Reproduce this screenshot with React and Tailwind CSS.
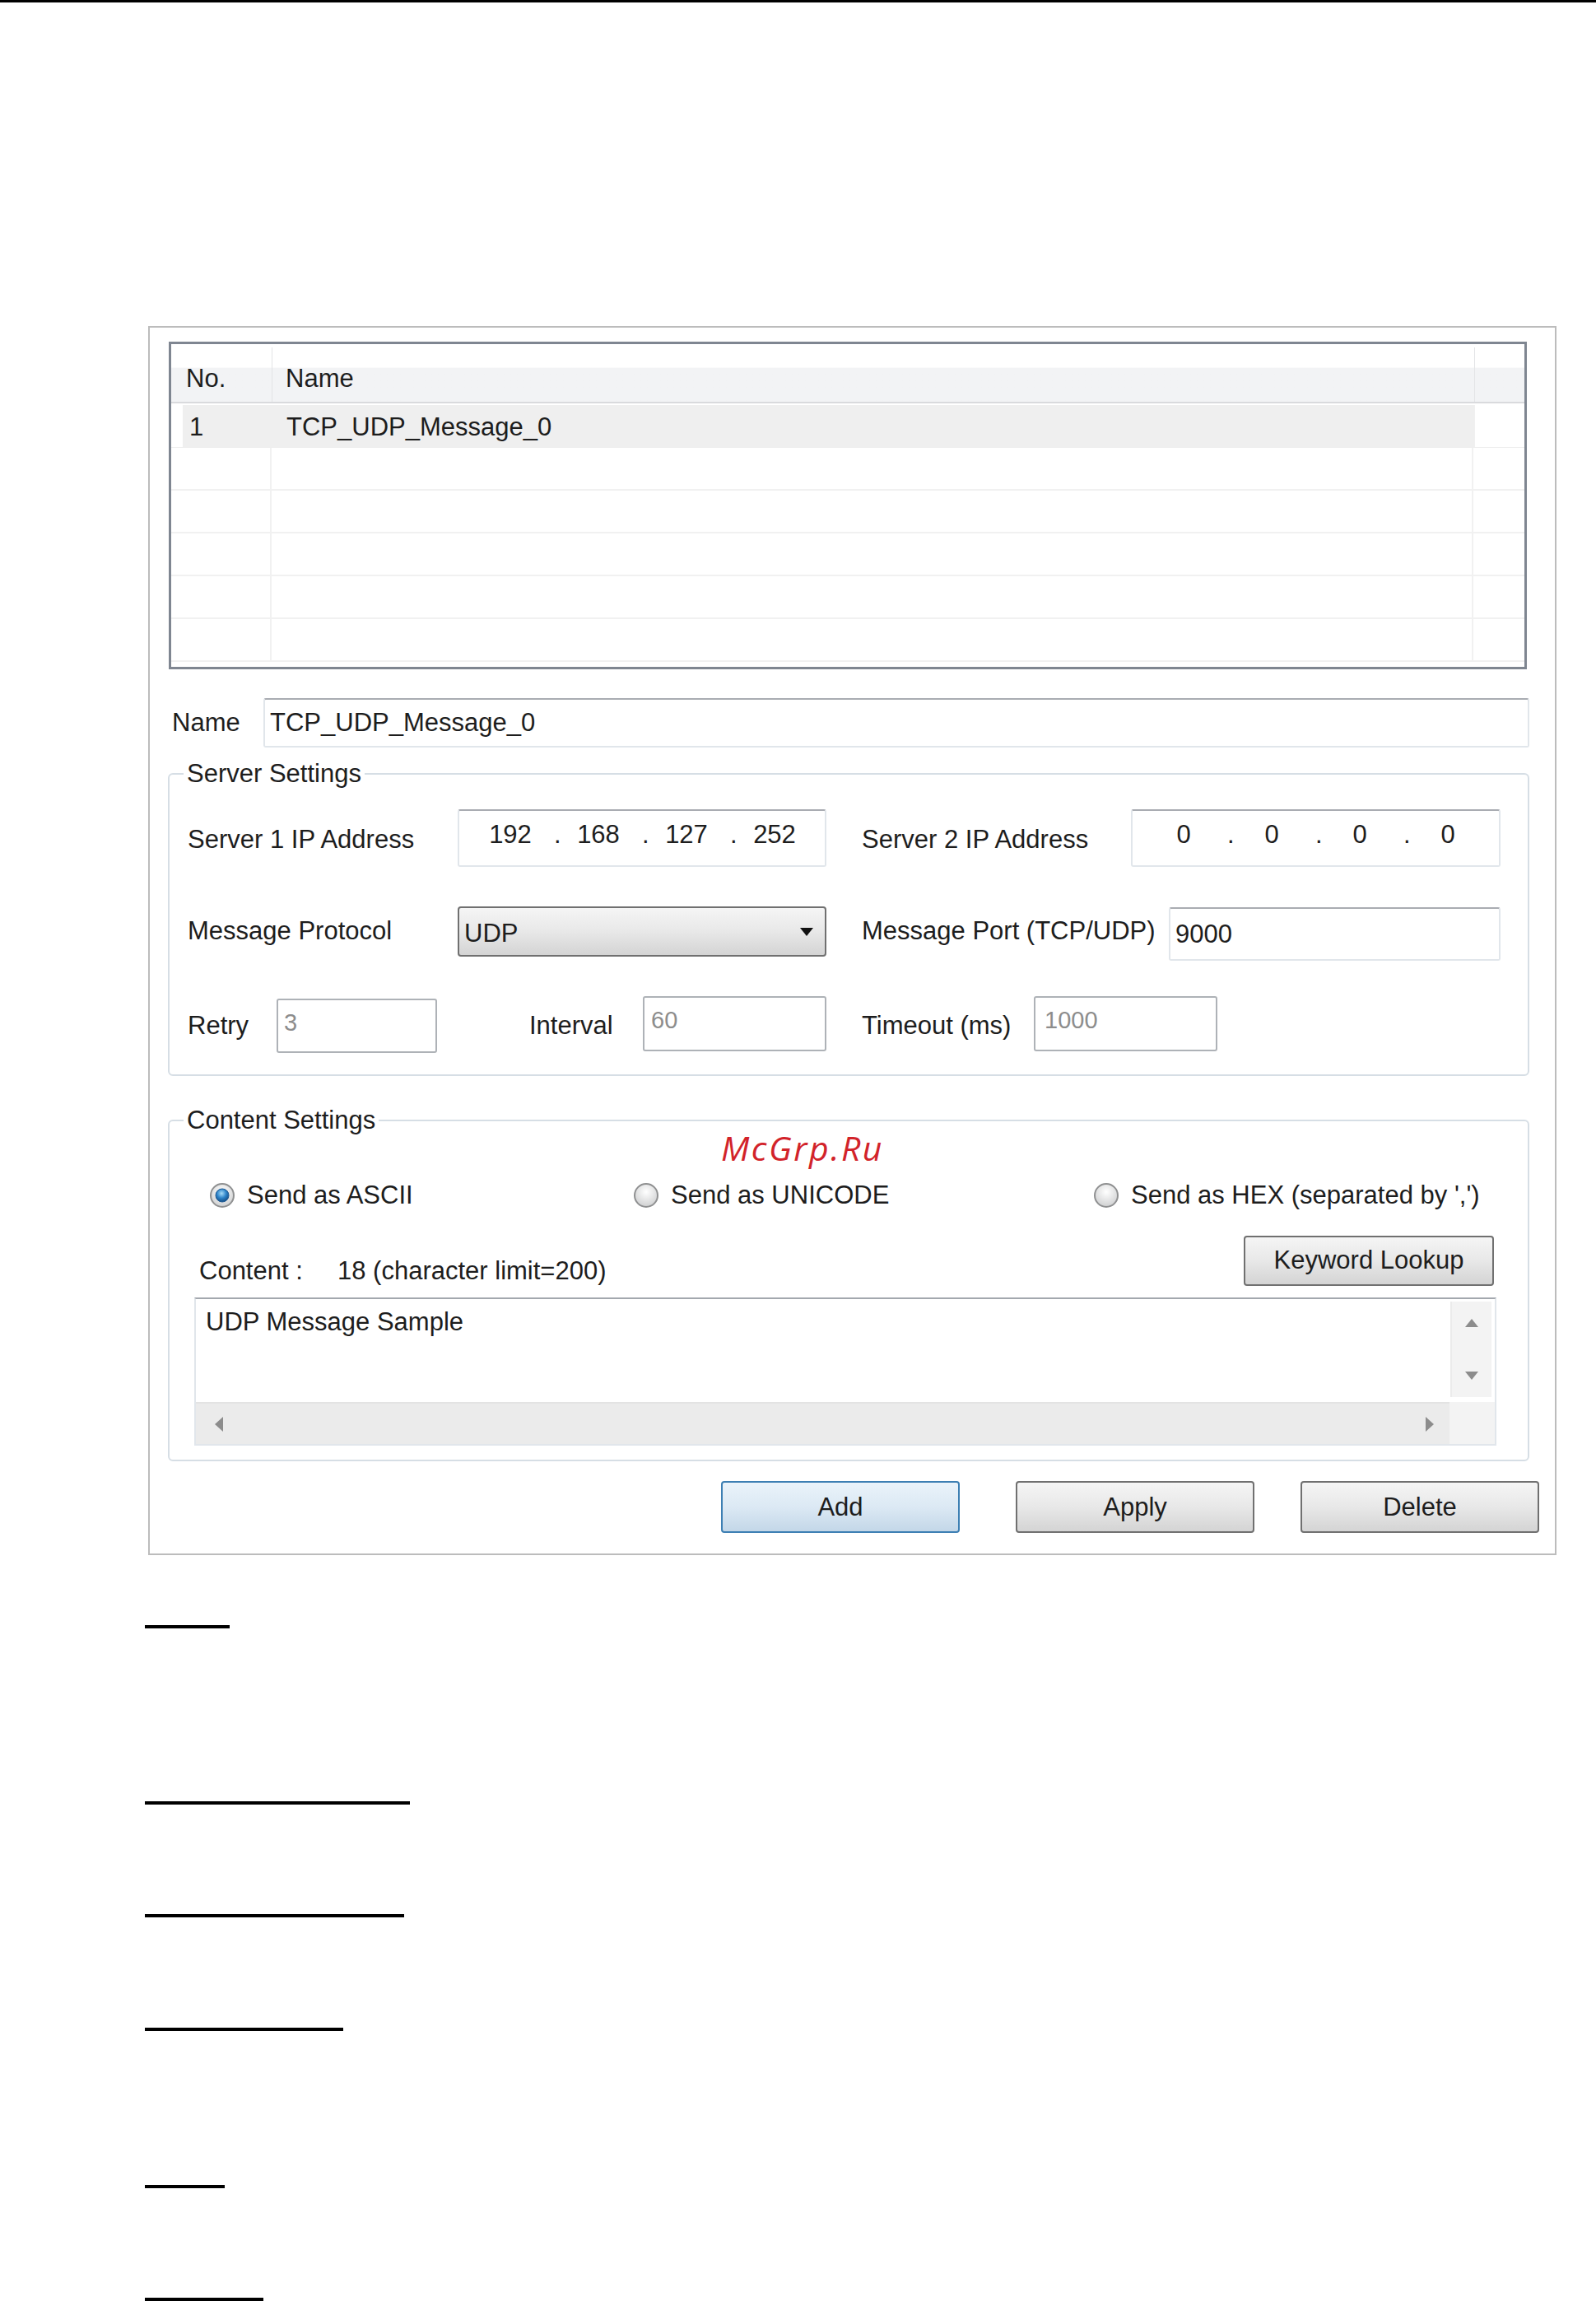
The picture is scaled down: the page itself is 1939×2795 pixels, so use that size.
import React from 'react';

// Windows-style text box; muted = the greyed-out numeric fields
function Field({ className = '', muted = false, children }) {
  return (
    <div
      className={
        'flex items-center bg-white rounded-[3px] border-2 ' +
        (muted
          ? 'border-[#aeb2b7] text-[#8d8d8d] text-[29px] pb-[8px] '
          : 'border-[#e1e6eb] border-t-[#a9acb2] ') +
        className
      }
    >
      {children}
    </div>
  );
}

function IpBox({ parts, className = '' }) {
  return (
    <Field className={'pl-[17px] pb-[8px] ' + className}>
      {parts.map((p, i) => (
        <React.Fragment key={i}>
          <span className="w-[90px] text-center">{p}</span>
          {i < 3 && <span className="w-[17px] pl-[8px]">.</span>}
        </React.Fragment>
      ))}
    </Field>
  );
}

function WinButton({ children, className = '', primary = false }) {
  return (
    <div
      className={
        'flex items-center justify-center rounded-[4px] border-2 ' +
        (primary
          ? 'border-[#3d7fb3] bg-linear-to-b from-[#eaf3fa] via-[#dce9f4] to-[#c3d7e8] '
          : 'border-[#707070] bg-linear-to-b from-[#f5f5f5] via-[#e8e8e8] to-[#d4d4d4] ') +
        className
      }
    >
      {children}
    </div>
  );
}

function Radio({ checked, id }) {
  return (
    <svg width="32" height="32" viewBox="0 0 32 32" className="shrink-0">
      <defs>
        <radialGradient id={id + '-ring'} cx="50%" cy="35%" r="65%">
          <stop offset="0" stopColor="#ffffff" />
          <stop offset="1" stopColor="#cfd0d1" />
        </radialGradient>
        <radialGradient id={id + '-dot'} cx="45%" cy="35%" r="65%">
          <stop offset="0" stopColor="#a8dcf8" />
          <stop offset="0.55" stopColor="#2b82c8" />
          <stop offset="1" stopColor="#174e86" />
        </radialGradient>
      </defs>
      <circle cx="16" cy="16" r="14" fill={`url(#${id}-ring)`} stroke="#8f9091" strokeWidth="2" />
      {checked && <circle cx="16" cy="16" r="8" fill={`url(#${id}-dot)`} stroke="#1f5a93" strokeWidth="1" />}
    </svg>
  );
}

function Arrow({ dir, className = '' }) {
  const pts = {
    up: '1,11 9,1 17,11',
    down: '1,1 17,1 9,11',
    left: '11,1 11,19 1,10',
    right: '1,1 1,19 11,10',
  }[dir];
  const vertical = dir === 'up' || dir === 'down';
  return (
    <svg width={vertical ? 18 : 12} height={vertical ? 12 : 20} className={className}>
      <polygon points={pts} fill="#8c8c8c" />
    </svg>
  );
}

function MessageTable() {
  const emptyRows = [0, 1, 2, 3, 4];
  return (
    <div className="ml-[23px] mt-[17px] w-[1650px] h-[398px] border-[3px] border-[#7f8691] bg-white flex flex-col">
      {/* header */}
      <div className="flex h-[72px] border-b-2 border-[#d9dadd] bg-linear-to-b from-white from-40% to-[#f2f3f5] to-42%">
        <div className="w-[122px] pl-[18px] flex items-end pb-[10px]">No.</div>
        <div className="w-px mt-[4px] bg-[#e3e4e6]" />
        <div className="w-[1460px] pl-[16px] flex items-end pb-[10px]">Name</div>
        <div className="w-px mt-[4px] bg-[#e3e4e6]" />
        <div className="flex-1" />
      </div>

      {/* selected row */}
      <div className="flex h-[52px] mt-[2px] border-b border-[#eeeeee]">
        <div className="ml-[14px] w-[1569px] bg-[#efefef] flex items-center pt-[2px]">
          <span className="w-[108px] pl-[8px]">1</span>
          <span className="pl-[18px]">TCP_UDP_Message_0</span>
        </div>
        <div className="w-px bg-[#f0f0f0]" />
        <div className="flex-1" />
      </div>

      {emptyRows.map((r) => (
        <div key={r} className="flex h-[52px] border-b-2 border-[#f1f1f1]">
          <div className="w-[122px] border-r-2 border-[#f1f1f1]" />
          <div className="w-[1460px] border-r-2 border-[#f1f1f1]" />
          <div className="flex-1" />
        </div>
      ))}
    </div>
  );
}

function ServerSettings() {
  return (
    <fieldset className="ml-[22px] mt-[14px] w-[1654px] border-2 border-[#d6dee5] rounded-[6px] pb-[28px]">
      <legend className="ml-[17px] px-[4px] leading-[36px]">Server Settings</legend>

      <div className="pl-[22px]">
        <div className="flex items-center mt-[25px] h-[70px]">
          <span className="w-[328px] pt-[4px]">Server 1 IP Address</span>
          <IpBox parts={['192', '168', '127', '252']} className="w-[448px] h-[70px]" />
          <span className="ml-[43px] w-[327px] pt-[4px]">Server 2 IP Address</span>
          <IpBox parts={['0', '0', '0', '0']} className="w-[449px] h-[70px]" />
        </div>

        <div className="flex items-start mt-[48px] h-[66px]">
          <span className="w-[328px] mt-[12px]">Message Protocol</span>
          <WinButton className="w-[448px] h-[61px] justify-between! pl-[6px] pr-[14px]">
            <span className="pt-[4px]">UDP</span>
            <svg width="16" height="10" viewBox="0 0 16 10">
              <polygon points="0,0 16,0 8,10" fill="#111111" />
            </svg>
          </WinButton>
          <span className="ml-[43px] w-[373px] mt-[12px]">Message Port (TCP/UDP)</span>
          <Field className="w-[403px] h-[65px] pl-[6px] mt-[1px]">9000</Field>
        </div>

        <div className="flex items-center mt-[42px] h-[68px]">
          <span className="w-[108px] pt-[6px]">Retry</span>
          <Field muted className="w-[195px] h-[66px] pl-[7px] mt-[6px]">3</Field>
          <span className="ml-[112px] w-[138px] pt-[6px]">Interval</span>
          <Field muted className="w-[223px] h-[67px] pl-[8px]">60</Field>
          <span className="ml-[43px] w-[209px] pt-[6px]">Timeout (ms)</span>
          <Field muted className="w-[223px] h-[67px] pl-[11px]">1000</Field>
        </div>
      </div>
    </fieldset>
  );
}

function ContentSettings() {
  return (
    <fieldset className="ml-[22px] mt-[36px] w-[1654px] border-2 border-[#d6dee5] rounded-[6px] pb-[17px]">
      <legend className="ml-[17px] px-[4px] leading-[36px]">Content Settings</legend>

      <div className="flex items-center mt-[55px] h-[36px] pl-[48px]">
        <div className="w-[515px] flex items-center gap-[14px]">
          <Radio checked id="r-ascii" />
          <span>Send as ASCII</span>
        </div>
        <div className="w-[559px] flex items-center gap-[14px]">
          <Radio id="r-uni" />
          <span>Send as UNICODE</span>
        </div>
        <div className="flex items-center gap-[14px]">
          <Radio id="r-hex" />
          <span>Send as HEX (separated by &apos;,&apos;)</span>
        </div>
      </div>

      <div className="flex items-end mt-[31px] h-[61px] pl-[36px] pr-[41px]">
        <span className="w-[168px]">Content :</span>
        <span>18 (character limit=200)</span>
        <WinButton className="ml-auto w-[304px] h-[61px] pb-[2px]">Keyword Lookup</WinButton>
      </div>

      <div className="ml-[30px] mt-[14px] w-[1582px] h-[180px] border-2 border-[#e1e6eb] border-t-[#a3a8ae] flex flex-col bg-white">
        <div className="flex h-[125px]">
          <div className="flex-1 pl-[12px] pt-[10px]">UDP Message Sample</div>
          <div className="w-[50px] mr-[4px] mt-[3px] mb-[6px] bg-[#f3f3f3] border-l-2 border-[#ebebeb] flex flex-col items-center justify-between py-[20px]">
            <Arrow dir="up" />
            <Arrow dir="down" />
          </div>
        </div>
        <div className="flex h-[51px]">
          <div className="flex-1 bg-[#ebebeb] border-t-2 border-[#e3e3e3] flex items-center justify-between pl-[22px] pr-[18px]">
            <Arrow dir="left" />
            <Arrow dir="right" />
          </div>
          <div className="w-[55px] bg-[#f3f3f3]" />
        </div>
      </div>
    </fieldset>
  );
}

export default function App() {
  const underlines = [
    { mt: 'mt-[85px]', w: 'w-[103px]' },
    { mt: 'mt-[210px]', w: 'w-[322px]' },
    { mt: 'mt-[133px]', w: 'w-[315px]' },
    { mt: 'mt-[134px]', w: 'w-[241px]' },
    { mt: 'mt-[187px]', w: 'w-[97px]' },
    { mt: 'mt-[133px]', w: 'w-[144px]' },
  ];

  return (
    <div className="relative w-[1939px] h-[2795px] overflow-hidden bg-white text-[#1d1d1d] font-['Liberation_Sans',Arial,sans-serif] text-[31px] leading-[36px]">
      <div className="h-[3px] bg-black" />

      {/* dialog panel */}
      <div className="ml-[180px] mt-[393px] w-[1711px] h-[1493px] border-2 border-[#bcbcbc] flex flex-col">
        <MessageTable />

        <div className="flex items-center ml-[27px] mt-[35px]">
          <span className="w-[111px]">Name</span>
          <Field className="w-[1538px] h-[60px] pl-[6px]">TCP_UDP_Message_0</Field>
        </div>

        <ServerSettings />
        <ContentSettings />

        <div className="flex mt-[24px]">
          <WinButton primary className="ml-[694px] w-[290px] h-[63px]">Add</WinButton>
          <WinButton className="ml-[68px] w-[290px] h-[63px]">Apply</WinButton>
          <WinButton className="ml-[56px] w-[290px] h-[63px]">Delete</WinButton>
        </div>
      </div>

      {/* underlined headings of the page below */}
      {underlines.map((u, i) => (
        <div key={i} className={'ml-[176px] h-[4px] bg-black ' + u.mt + ' ' + u.w} />
      ))}

      {/* watermark */}
      <span className="absolute left-[876px] top-[1374px] text-[41px] leading-none italic tracking-[2.5px] text-[#d2232a] font-['Open_Sans',sans-serif]">
        McGrp.Ru
      </span>
    </div>
  );
}
